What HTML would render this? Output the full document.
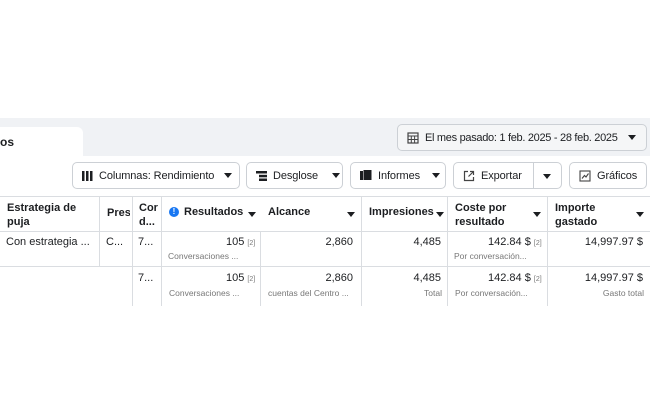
<!DOCTYPE html>
<html><head><meta charset="utf-8"><style>
*{box-sizing:border-box;margin:0;padding:0}
body{width:650px;height:400px;background:#fff;font-family:"Liberation Sans",sans-serif;color:#1c1e21;position:relative;overflow:hidden;font-size:11px}
.a{position:absolute;white-space:nowrap}
.band{left:0;top:118px;width:650px;height:38px;background:#f0f2f5}
.tab{left:0;top:127px;width:83px;height:29px;background:#fff;border-radius:0 6px 0 0;font-size:12px;font-weight:bold;padding:8px 0 0 0;color:#1c1e21}
.btn{border:1px solid #ccd0d5;border-radius:5px;background:#fff;height:27px;font-size:11px;display:flex;align-items:center;padding-left:9px;gap:6px;letter-spacing:-0.1px}
.tri{width:0;height:0;border-left:4px solid transparent;border-right:4px solid transparent;border-top:5px solid #1c1e21;display:inline-block}
.hl{background:#dadde1}
.t{font-size:11px}
.s{font-size:8.5px;color:#777}
.r{text-align:right}
.b{font-weight:bold}
</style></head><body>
<div class="a band"></div>
<div class="a tab">os</div>
<div class="a btn" style="left:397px;top:124px;width:250px;background:#f5f6f7;letter-spacing:-0.3px">
<svg width="12" height="12" viewBox="0 0 12 12"><rect x="1" y="1" width="10" height="10" fill="none" stroke="#444" stroke-width="1.2"/><path d="M1 4h10M4.3 4v7M7.6 4v7M1 7.5h10" stroke="#444" stroke-width="1"/></svg>
<span>El mes pasado: 1 feb. 2025 - 28 feb. 2025</span><span class="tri" style="margin-left:4px"></span></div>

<div class="a btn" style="left:72px;top:162px;width:168px"><svg width="11" height="10" viewBox="0 0 11 10"><rect x="0" y="0" width="2.5" height="10" fill="#1c1e21"/><rect x="4" y="0" width="2.5" height="10" fill="#1c1e21"/><rect x="8" y="0" width="2.5" height="10" fill="#1c1e21"/></svg><span>Columnas: Rendimiento</span><span class="tri" style="margin-left:4px"></span></div>
<div class="a btn" style="left:246px;top:162px;width:97px"><svg width="11" height="10" viewBox="0 0 11 10"><rect x="0" y="0" width="11" height="2.5" fill="#1c1e21"/><rect x="3" y="3.8" width="8" height="2.5" fill="#1c1e21"/><rect x="3" y="7.5" width="8" height="2.5" fill="#1c1e21"/></svg><span>Desglose</span><span class="tri" style="margin-left:8px"></span></div>
<div class="a btn" style="left:350px;top:162px;width:96px"><svg width="12" height="11" viewBox="0 0 12 11"><rect x="0" y="1" width="3" height="9" fill="#1c1e21"/><rect x="3.5" y="0" width="8" height="10" fill="#1c1e21"/></svg><span>Informes</span><span class="tri" style="margin-left:6px"></span></div>
<div class="a btn" style="left:453px;top:162px;width:109px"><svg width="12" height="12" viewBox="0 0 12 12"><path d="M5 1.5H1.5v9h9V7M7 1.5h3.5V5M10.5 1.5L5.5 6.5" fill="none" stroke="#444" stroke-width="1.2"/></svg><span>Exportar</span></div>
<div class="a" style="left:533px;top:163px;width:1px;height:25px;background:#ccd0d5"></div>
<span class="a tri" style="left:543px;top:174px"></span>
<div class="a btn" style="left:569px;top:162px;width:78px"><svg width="12" height="12" viewBox="0 0 12 12"><rect x="1" y="1" width="10" height="10" fill="none" stroke="#444" stroke-width="1.1"/><path d="M3 8.5L5.5 5.5 7 7 9.5 3.5" fill="none" stroke="#444" stroke-width="1.1"/></svg><span>Gráficos</span></div>

<div class="a hl" style="left:0;top:196px;width:650px;height:1px"></div>
<div class="a hl" style="left:0;top:231px;width:650px;height:1px"></div>
<div class="a hl" style="left:0;top:266px;width:650px;height:1px"></div>
<div class="a hl" style="left:99px;top:196px;width:1px;height:70px"></div>
<div class="a hl" style="left:132px;top:196px;width:1px;height:110px"></div>
<div class="a hl" style="left:161px;top:196px;width:1px;height:110px"></div>
<div class="a hl" style="left:260px;top:231px;width:1px;height:75px"></div>
<div class="a hl" style="left:361px;top:196px;width:1px;height:110px"></div>
<div class="a hl" style="left:447px;top:196px;width:1px;height:110px"></div>
<div class="a hl" style="left:547px;top:196px;width:1px;height:110px"></div>

<div class="a t b" style="left:7px;top:201px;line-height:14px">Estrategia de<br>puja</div>
<div class="a t b" style="left:107px;top:207px;width:23px;overflow:hidden">Pres</div>
<div class="a t b" style="left:139px;top:201px;line-height:14px">Cor<br>d...</div>
<div class="a" style="left:169px;top:207px;width:10px;height:10px;border-radius:50%;background:#1877f2;color:#fff;font-size:8px;text-align:center;line-height:10px;font-weight:bold">!</div>
<div class="a t b" style="left:184px;top:206px">Resultados</div><span class="a tri" style="left:248px;top:212px"></span>
<div class="a t b" style="left:268px;top:206px">Alcance</div><span class="a tri" style="left:347px;top:212px"></span>
<div class="a t b" style="left:369px;top:206px">Impresiones</div><span class="a tri" style="left:436px;top:212px"></span>
<div class="a t b" style="left:455px;top:201px;line-height:14px">Coste por<br>resultado</div><span class="a tri" style="left:533px;top:212px"></span>
<div class="a t b" style="left:555px;top:201px;line-height:14px">Importe<br>gastado</div><span class="a tri" style="left:636px;top:212px"></span>

<div class="a t" style="left:6px;top:236px">Con estrategia ...</div>
<div class="a t" style="left:106px;top:236px">C...</div>
<div class="a t" style="left:138px;top:236px">7...</div>
<div class="a t" style="left:226px;top:236px">105 <span style="font-size:7px;color:#777">[2]</span></div>
<div class="a s" style="left:168px;top:251px">Conversaciones ...</div>
<div class="a t r" style="left:270px;top:236px;width:83px">2,860</div>
<div class="a t r" style="left:370px;top:236px;width:71px">4,485</div>
<div class="a t" style="left:488px;top:236px">142.84 $ <span style="font-size:7px;color:#777">[2]</span></div>
<div class="a s" style="left:454px;top:251px">Por conversación...</div>
<div class="a t r" style="left:550px;top:236px;width:93px">14,997.97 $</div>
<div class="a t" style="left:138px;top:272px">7...</div>
<div class="a t" style="left:226px;top:272px">105 <span style="font-size:7px;color:#777">[2]</span></div>
<div class="a s" style="left:169px;top:288px">Conversaciones ...</div>
<div class="a t r" style="left:270px;top:272px;width:83px">2,860</div>
<div class="a s" style="left:268px;top:288px">cuentas del Centro ...</div>
<div class="a t r" style="left:370px;top:272px;width:71px">4,485</div>
<div class="a s r" style="left:370px;top:288px;width:72px">Total</div>
<div class="a t" style="left:488px;top:272px">142.84 $ <span style="font-size:7px;color:#777">[2]</span></div>
<div class="a s" style="left:455px;top:288px">Por conversación...</div>
<div class="a t r" style="left:550px;top:272px;width:93px">14,997.97 $</div>
<div class="a s r" style="left:550px;top:288px;width:94px">Gasto total</div>
</body></html>
